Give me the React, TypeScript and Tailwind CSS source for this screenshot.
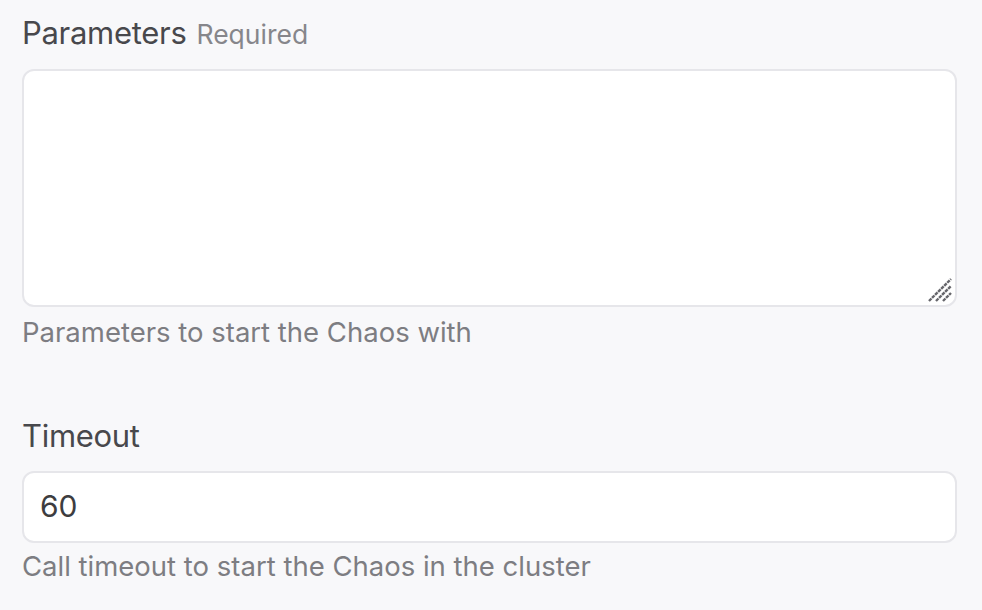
export default function App() {
  return (
    <div
      className="min-h-[610px] w-[982px] bg-[#f8f8fa] px-[22px] pt-[14px] text-[#48484c]"
      style={{ fontFamily: 'Inter, "Noto Sans", sans-serif' }}
    >
      <div className="flex items-baseline gap-[10px]">
        <span className="text-[31px] leading-[38px] tracking-[-0.3px]">Parameters</span>
        <span className="text-[26.5px] text-[#86868b]">Required</span>
      </div>
      <div className="mt-[14px] relative h-[238px] w-[935px] rounded-[12px] border-2 border-[#e6e6ea] bg-white">
        <svg className="absolute right-[2px] bottom-[2px]" width="26" height="26" viewBox="0 0 26 26">
          <g stroke="#66666b" strokeWidth="2.4" strokeDasharray="3.5 0.8">
            <line x1="2" y1="24" x2="24" y2="2" />
            <line x1="9" y1="24" x2="24" y2="9" />
            <line x1="16" y1="24" x2="24" y2="16" />
          </g>
        </svg>
      </div>
      <p className="mt-[8px] text-[27.5px] leading-[34px] text-[#7d7d82]">Parameters to start the Chaos with</p>

      <p className="mt-[68px] text-[31px] leading-[38px] tracking-[-0.3px]">Timeout</p>
      <div className="mt-[16px] flex h-[72px] w-[935px] items-center rounded-[12px] border-2 border-[#e6e6ea] bg-white px-[16px]">
        <span className="text-[30px] text-[#3d3d40]">60</span>
      </div>
      <p className="mt-[6px] text-[27.5px] leading-[34px] text-[#7d7d82]">Call timeout to start the Chaos in the cluster</p>
    </div>
  );
}
